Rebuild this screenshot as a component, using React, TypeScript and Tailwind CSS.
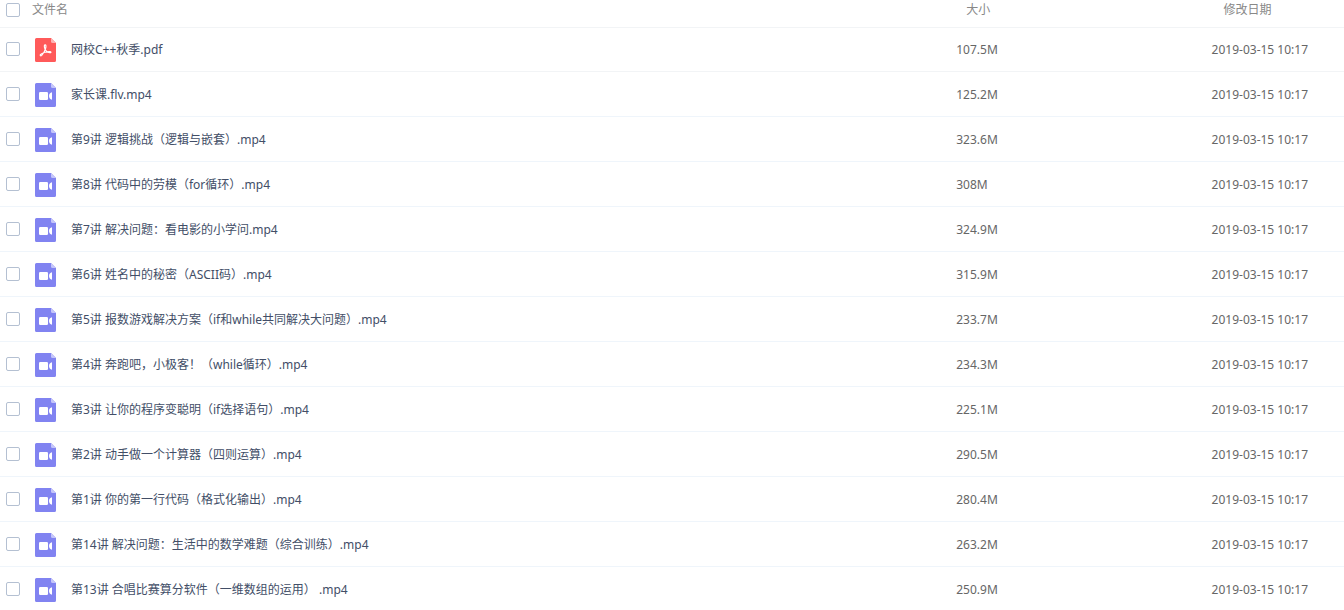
/**
 * File list - checkbox, name, size and modified date for each file
 */

import clsx from 'clsx';

type FileKind = 'pdf' | 'video';

interface FileItem {
  name: string;
  kind: FileKind;
  size: string;
  modified: string;
}

const files: FileItem[] = [
  { name: '网校C++秋季.pdf', kind: 'pdf', size: '107.5M', modified: '2019-03-15 10:17' },
  { name: '家长课.flv.mp4', kind: 'video', size: '125.2M', modified: '2019-03-15 10:17' },
  { name: '第9讲 逻辑挑战（逻辑与嵌套）.mp4', kind: 'video', size: '323.6M', modified: '2019-03-15 10:17' },
  { name: '第8讲 代码中的劳模（for循环）.mp4', kind: 'video', size: '308M', modified: '2019-03-15 10:17' },
  { name: '第7讲 解决问题：看电影的小学问.mp4', kind: 'video', size: '324.9M', modified: '2019-03-15 10:17' },
  { name: '第6讲 姓名中的秘密（ASCII码）.mp4', kind: 'video', size: '315.9M', modified: '2019-03-15 10:17' },
  { name: '第5讲 报数游戏解决方案（if和while共同解决大问题）.mp4', kind: 'video', size: '233.7M', modified: '2019-03-15 10:17' },
  { name: '第4讲 奔跑吧，小极客！（while循环）.mp4', kind: 'video', size: '234.3M', modified: '2019-03-15 10:17' },
  { name: '第3讲 让你的程序变聪明（if选择语句）.mp4', kind: 'video', size: '225.1M', modified: '2019-03-15 10:17' },
  { name: '第2讲 动手做一个计算器（四则运算）.mp4', kind: 'video', size: '290.5M', modified: '2019-03-15 10:17' },
  { name: '第1讲 你的第一行代码（格式化输出）.mp4', kind: 'video', size: '280.4M', modified: '2019-03-15 10:17' },
  { name: '第14讲 解决问题：生活中的数学难题（综合训练）.mp4', kind: 'video', size: '263.2M', modified: '2019-03-15 10:17' },
  { name: '第13讲 合唱比赛算分软件（一维数组的运用） .mp4', kind: 'video', size: '250.9M', modified: '2019-03-15 10:17' }
];

function FileIcon({ kind }: { kind: FileKind }) {
  const isPdf = kind === 'pdf';

  return (
    <svg className="w-[21px] h-6 shrink-0" viewBox="0 0 21 24" fill="none" aria-hidden="true">
      <path d="M1.5 0H16l5 5v17.5a1.5 1.5 0 0 1-1.5 1.5h-18A1.5 1.5 0 0 1 0 22.5v-21A1.5 1.5 0 0 1 1.5 0z" fill={isPdf ? '#ff5a5a' : '#8183f1'} />
      <path d="M16 0l5 5h-3.5A1.5 1.5 0 0 1 16 3.5z" fill={isPdf ? '#ffb3b3' : '#c5c6fa'} />
      {isPdf ? (
        <path
          d="M9.9 6.8c1.2-.2 1.2 1.6.8 3.4-.7 2.7-2.4 5.5-4 7.2-1.1 1-2-.1-1.1-1 2.2-1.7 5.8-2.9 9-2.9 1.8 0 1.7 1.4.2 1.2-2.4-.4-4.5-2.2-5.2-4.9-.4-1.7-.4-2.8.3-3z"
          stroke="#fff"
          strokeWidth="1.2"
          strokeLinejoin="round"
        />
      ) : (
        <>
          <rect x="4" y="9" width="9" height="8" rx="1.3" fill="#fff" />
          <path d="M17 9.3v7.4c-1.8-.4-3-1.7-3-3.7s1.2-3.3 3-3.7z" fill="#fff" />
        </>
      )}
    </svg>
  );
}

function Checkbox({ label }: { label: string }) {
  return (
    <input
      type="checkbox"
      aria-label={label}
      className="appearance-none size-3.5 shrink-0 rounded-xs border border-[#b4c0d2] bg-white checked:bg-[#8183f1]"
    />
  );
}

function FileRow({ file, first }: { file: FileItem; first: boolean }) {
  // The first row also draws the line under the header
  const cell = clsx(
    'h-[45px] p-0 border-b',
    first ? 'border-[#f2f4f6] inset-shadow-[0_1px_#f2f4f6]' : 'border-[#eff5fb]'
  );

  return (
    <tr>
      <td className={cell}>
        <div className="flex items-center gap-[15px] pl-1.5">
          <Checkbox label={file.name} />
          <div className="pt-0.5">
            <FileIcon kind={file.kind} />
          </div>
          <a href="#" className="pt-0.5 text-[#424e67] whitespace-pre">
            {file.name}
          </a>
        </div>
      </td>
      <td className={clsx(cell, 'text-[#666]')}>
        <div className="pl-0.5 pt-0.5">{file.size}</div>
      </td>
      <td className={clsx(cell, 'text-[#666] whitespace-nowrap')}>
        <div className="pl-0.5 pt-0.5">{file.modified}</div>
      </td>
    </tr>
  );
}

export default function App() {
  return (
    <main className="h-screen overflow-hidden bg-white font-['Noto_Sans','Noto_Sans_CJK_SC',sans-serif] text-xs">
      <table className="w-full table-fixed border-separate border-spacing-0 text-left">
        <thead>
          <tr className="align-top text-[#888]">
            <th className="h-[27px] w-[71%] p-0 font-normal">
              <div className="flex items-start gap-3 pl-1.5 pt-[3px] leading-3.5">
                <Checkbox label="全选" />
                文件名
              </div>
            </th>
            <th className="w-[19%] p-0 pl-3 pt-[3px] font-normal leading-3.5">大小</th>
            <th className="w-[10%] p-0 pl-3.5 pt-[3px] font-normal leading-3.5">修改日期</th>
          </tr>
        </thead>
        <tbody>
          {files.map((file, index) => (
            <FileRow key={file.name} file={file} first={index === 0} />
          ))}
        </tbody>
      </table>
    </main>
  );
}
